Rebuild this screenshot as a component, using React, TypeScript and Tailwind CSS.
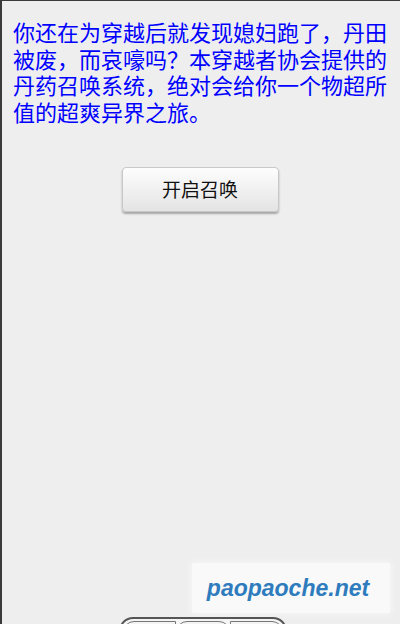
export default function App() {
  return (
    <div className="relative h-[624px] w-[400px] overflow-hidden border-l-2 border-t border-[#3a3a3a] bg-[#eeeeee]">
      <div
        className="pl-[11px] pr-[8px] pt-[17px] text-[22px] leading-[26.5px] text-[#0000ff]"
        style={{ fontFamily: '"Noto Sans CJK SC", "Noto Sans", sans-serif' }}
      >
        你还在为穿越后就发现媳妇跑了，丹田被废，而哀嚎吗？本穿越者协会提供的丹药召唤系统，绝对会给你一个物超所值的超爽异界之旅。
      </div>

      <div className="mt-[43px] flex justify-center pr-[2px]">
        <button
          className="h-[45px] w-[157px] rounded-[4px] border border-[#c8c8c8] bg-gradient-to-b from-[#fdfdfd] to-[#e4e4e4] text-[19px] text-[#111] shadow-[0_2px_2px_rgba(0,0,0,0.3)]"
          style={{ fontFamily: '"Noto Sans CJK SC", "Noto Sans", sans-serif' }}
        >
          开启召唤
        </button>
      </div>

      {/* watermark */}
      <div className="absolute left-[190px] top-[562px] flex h-[50px] w-[198px] items-center justify-center bg-[#f9f9f9] pr-[6px] shadow-[0_0_8px_#f9f9f9]">
        <span
          className="text-[23px] font-bold italic text-[#2e7cbd]"
          style={{ fontFamily: '"Liberation Sans", Arial, sans-serif' }}
        >
          paopaoche.net
        </span>
      </div>

      {/* floating pill at the bottom edge */}
      <div className="absolute left-[117px] top-[616px] flex h-[30px] w-[168px] rounded-[14px] border-2 border-[#555] bg-[#f4f4f4] p-[2px]">
        <div className="flex flex-1 items-start justify-center rounded-l-[12px] border border-[#777]">
          <span className="mt-[4px] h-0 w-0 border-x-[4px] border-b-[6px] border-x-transparent border-b-[#333]" />
        </div>
        <div className="flex flex-1 items-start justify-center rounded-[12px] border border-[#777]" />
        <div className="flex flex-1 items-start justify-center rounded-r-[12px] border border-[#777]">
          <span className="mt-[4px] h-0 w-0 border-x-[4px] border-b-[6px] border-x-transparent border-b-[#333]" />
        </div>
      </div>
    </div>
  );
}
